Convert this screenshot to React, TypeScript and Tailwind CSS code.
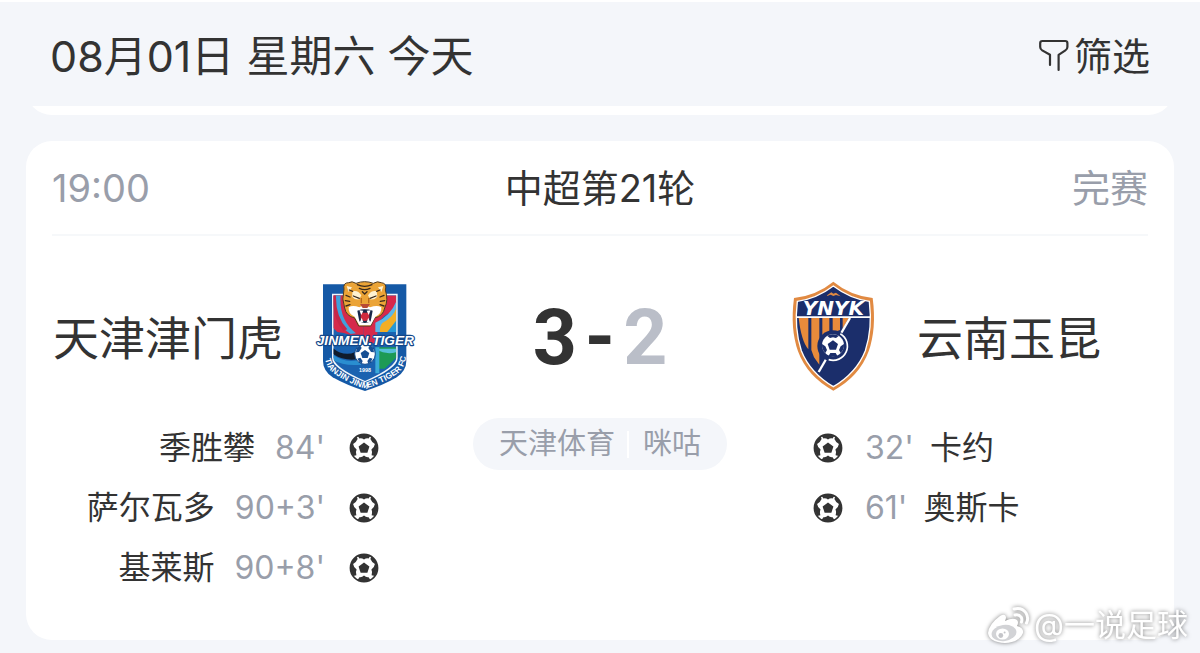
import { clsx } from 'clsx';

type Goal = { player: string; minute: string };

const MATCH = {
  time: '19:00',
  round: '中超第21轮',
  status: '完赛',
  home: { name: '天津津门虎', score: 3 },
  away: { name: '云南玉昆', score: 2 },
  channels: ['天津体育', '咪咕'],
};

const HOME_GOALS: Goal[] = [
  { player: '季胜攀', minute: "84'" },
  { player: '萨尔瓦多', minute: "90+3'" },
  { player: '基莱斯', minute: "90+8'" },
];

const AWAY_GOALS: Goal[] = [
  { player: '卡约', minute: "32'" },
  { player: '奥斯卡', minute: "61'" },
];

function FilterIcon() {
  return (
    <svg
      viewBox="0 0 32 34"
      className="h-[34px] w-8"
      fill="none"
      stroke="#333"
      strokeWidth="2.2"
      strokeLinecap="round"
      strokeLinejoin="round"
      aria-hidden="true"
    >
      <path d="M12 26V15.800L4.200 11.400Q2.200 10.200 2.200 8V4.200Q2.200 2 4.400 2H27.200Q29.400 2 29.400 4.200V8Q29.400 10.200 27.400 11.400L20.600 15.800V31" />
    </svg>
  );
}

function BallIcon() {
  return (
    <svg viewBox="0 0 30 30" className="size-[30px] shrink-0" aria-hidden="true">
      <circle cx="15" cy="15" r="13.600" fill="#fff" stroke="#333" strokeWidth="1.600" />
      <g fill="#333">
        <path d="M15 9.400l5.400 4-2 6.400h-6.800l-2-6.400z" />
        <path d="M8.600 2.800Q15-.2 21.400 2.800L19.600 5.400Q17 5 15 6.400Q13 5 10.400 5.400z" />
        <path d="M22.200 3.400Q27.600 7 28.600 14Q28.600 19 25.800 23L22.600 22.200Q23.600 18.600 22.400 16.400Q25.400 14.400 25.900 11Q22.800 9.400 21.400 6z" />
        <path d="M7.800 3.400Q2.400 7 1.400 14Q1.400 19 4.200 23L7.400 22.200Q6.400 18.600 7.600 16.400Q4.600 14.400 4.100 11Q7.200 9.400 8.600 6z" />
        <path d="M8.600 27Q15 30.200 21.400 27L19.600 24.200Q17 24.600 15 22.600Q13 24.600 10.400 24.200z" />
      </g>
    </svg>
  );
}

function TianjinCrest() {
  return (
    <svg
      viewBox="51 33 288 330"
      className="h-[110px] w-24 shrink-0 overflow-visible"
      role="img"
      aria-label="天津津门虎"
    >
      <defs>
        <clipPath id="tj-field">
          <path d="M100 76H289V262Q289 292 195 333Q100 292 100 262Z" />
        </clipPath>
        <path id="tj-ring" d="M73 244Q72 288 102 311Q150 343 196 356Q244 343 292 311Q322 286 318 236" />
      </defs>
      <path d="M69 43H319V272Q319 302 290 322Q250 346 195 363Q140 346 98 322Q69 302 69 272Z" fill="#1559a6" />
      <path d="M96 71H293V264Q293 296 195 337Q96 296 96 264Z" fill="#f1f6fb" />
      <g clipPath="url(#tj-field)">
        <rect x="96" y="70" width="200" height="270" fill="#1a62b0" />
        <path d="M96 70H190V215Q150 190 112 186L96 170Z" fill="#d52a4b" />
        <path d="M122 76Q116 150 168 190L152 192Q98 160 104 76Z" fill="#3fa0dc" />
        <path d="M108 76Q106 140 142 178L130 182Q98 150 98 76Z" fill="#c62748" />
        <path d="M190 110H232V220H190Z" fill="#d52a4b" />
        <path d="M226 76H290V120Q248 130 226 172Z" fill="#d7284a" />
        <path d="M290 92Q270 140 226 158V186H290Z" fill="#5cb6e8" />
        <path d="M290 110Q282 140 248 158Q238 168 240 186H270Q290 160 290 150Z" fill="#f3ae25" />
        <path d="M290 150L262 186H290Z" fill="#2798d6" />
        <path d="M96 232Q130 262 166 246L172 268Q130 274 96 250Z" fill="#101b2b" />
        <path d="M96 252Q130 280 176 270L184 284Q130 290 96 268Z" fill="#2a8ed0" />
        <path d="M228 232H290V262L254 296H228Z" fill="#1d9a55" />
        <path d="M230 238Q258 256 290 246V236H230Z" fill="#54bfd8" />
        <path d="M226 232H238V310H226Z" fill="#3aa9d8" />
      </g>

      {/* tiger head */}
      <path
        d="M132 58Q128 38 146 38Q156 32 168 40Q194 30 220 40Q232 32 244 38Q262 40 256 60Q266 90 254 114Q250 138 224 144L212 168H176L164 144Q138 138 134 114Q124 88 132 58Z"
        fill="#eba437"
        stroke="#4d3a23"
        strokeWidth="3"
      />
      <path d="M140 48l16 4-10 14zM250 48l-16 4 10 14z" fill="#fff3d4" />
      <path
        d="M146 112Q158 104 178 112L194 104 210 112Q232 104 244 112Q246 132 226 140L212 166H178L164 140Q144 132 146 112Z"
        fill="#fff"
      />
      <path
        d="M158 64Q174 60 184 76L178 88Q164 90 156 80ZM230 64Q214 60 204 76L210 88Q224 90 232 80Z"
        fill="#fff2d0"
      />
      <path
        d="M172 44Q194 54 216 44M178 55Q194 63 210 55M187 65L194 72 201 65M138 76l12 5M136 92l13 2M138 108l12-4M252 76l-12 5M254 92l-13 2M252 108l-12-4M160 78l18 7M228 78l-18 7M148 60l10 4M240 60l-10 4"
        fill="none"
        stroke="#3a2a1c"
        strokeWidth="4"
        strokeLinecap="round"
      />
      <path d="M184 84V100M206 84V100" stroke="#b7691c" strokeWidth="4" />
      <path d="M180 102H210L202 114H188Z" fill="#b84a35" />
      <path d="M172 122Q194 114 218 122L212 154Q194 164 178 154Z" fill="#182849" />
      <path d="M182 128H208V148Q194 158 182 148Z" fill="#cf2a3e" />
      <path d="M178 121l6 14 6-13zM212 121l-6 14-6-13zM180 156l5-13 5 14zM210 156l-5-13-5 14z" fill="#fff" />

      {/* ball */}
      <circle cx="195" cy="252" r="31" fill="#fff" stroke="#134b8e" strokeWidth="3" />
      <path
        d="M195 240l13 9-5 15h-16l-5-15zM170 234l10-8 5 8-8 12-9 1zM220 234l-10-8-5 8 8 12 9 1zM172 266l9-3 7 10-3 8q-8-4-13-15zM218 266l-9-3-7 10 3 8q8-4 13-15z"
        fill="#174f93"
      />
      <text
        x="195"
        y="305"
        textAnchor="middle"
        fill="#fff"
        className="font-['Liberation_Sans'] text-[16px] font-bold"
      >
        1998
      </text>

      <text
        x="196"
        y="225"
        textAnchor="middle"
        fill="#fff"
        stroke="#14478a"
        strokeWidth="7"
        strokeLinejoin="round"
        paintOrder="stroke"
        className="font-['Liberation_Sans'] text-[41px] font-bold italic"
      >
        JINMEN.TIGER
      </text>
      <text fill="#fff" className="font-['Liberation_Sans'] text-[25px] font-bold">
        <textPath href="#tj-ring" startOffset="50%" textAnchor="middle">
          TIANJIN JINMEN TIGER FC
        </textPath>
      </text>
    </svg>
  );
}

function YunnanCrest() {
  return (
    <svg
      viewBox="51 33 288 330"
      className="h-[110px] w-24 shrink-0"
      role="img"
      aria-label="云南玉昆"
    >
      <defs>
        <clipPath id="yn-field">
          <path d="M84 144H298Q304 190 284 244Q258 306 190 348Q122 306 96 244Q78 190 84 144Z" />
        </clipPath>
      </defs>
      <path
        d="M190 35Q240 76 308 84Q320 176 296 244Q268 320 190 362Q112 320 84 244Q60 176 72 84Q140 76 190 35Z"
        fill="#e18a42"
      />
      <path
        d="M190 48Q240 86 298 94Q308 176 286 242Q260 308 190 350Q120 308 94 242Q72 176 82 94Q140 86 190 48Z"
        fill="#1b2e6b"
        stroke="#fff"
        strokeWidth="4"
      />
      <path d="M168 78L184 67 190 71 198 68 212 79 198 75 190 78 182 74Z" fill="#e18a42" />
      <path d="M80 139H302V144H80Z" fill="#fff" />
      <g clipPath="url(#yn-field)">
        <path
          d="M86 144H115V238Q94 214 86 144ZM124 144H148V284L132 262L124 240ZM157 144H178V184L157 212ZM188 144H210V180L188 188ZM218 144H236L218 176Z"
          fill="#e98b3b"
        />
        <path d="M240 144L146 306" stroke="#fff" strokeWidth="7" />
      </g>
      <circle cx="189" cy="228" r="47" fill="#1b2e6b" />
      <path d="M211 191A43 43 0 0 1 176 269" fill="none" stroke="#fff" strokeWidth="5" />
      <circle cx="189" cy="226" r="33" fill="#fff" />
      <path
        d="M189 211l15 11-6 17h-19l-6-17zM171 197q17-9 36 0l-9 7-9-2-9 2zM222 222q1 17-10 27l-5-9 5-11zM156 222q-1 17 10 27l5-9-5-11zM176 257q13 5 26 0l-5-8h-16z"
        fill="#1b2e6b"
      />
      <text
        x="190"
        y="135"
        textAnchor="middle"
        fill="#fff"
        className="font-['DejaVu_Sans'] text-[60px] font-bold italic"
      >
        YNYK
      </text>
    </svg>
  );
}

function WeiboIcon() {
  return (
    <svg viewBox="0 0 44 38" className="h-[38px] w-11" aria-hidden="true">
      <path
        d="M14 10Q19 7 20 11Q20 13 19 15Q27 11 31 14Q33 16 31 20Q38 22 37 27Q34 36 19 37Q3 36 2 27Q3 18 14 10Z"
        fill="#fff"
      />
      <ellipse cx="18" cy="27" rx="12.500" ry="8" fill="#d2d3d6" transform="rotate(-8 18 27)" />
      <ellipse cx="16.500" cy="28" rx="6.500" ry="5.500" fill="#fff" />
      <circle cx="14.800" cy="29.500" r="2.400" fill="#c4c5c9" />
      <circle cx="18.600" cy="26.500" r="1" fill="#c4c5c9" />
      <path
        d="M28 3Q36 1 40 7Q43 12 40.500 17M29 9Q33 8 35 11Q36.500 13 35.500 16"
        fill="none"
        stroke="#fff"
        strokeWidth="3"
        strokeLinecap="round"
      />
    </svg>
  );
}

function GoalList({ goals, side }: { goals: Goal[]; side: 'home' | 'away' }) {
  const isHome = side === 'home';

  return (
    <ul>
      {goals.map((goal) => (
        <li
          key={goal.player}
          className={clsx(
            'flex h-[60px] items-center text-[32px] leading-10 whitespace-nowrap',
            isHome ? 'flex-row-reverse gap-6 pr-[34px]' : 'gap-[22px] pl-[26px]',
          )}
        >
          <BallIcon />
          <div className={clsx('flex items-center', isHome ? 'flex-row-reverse gap-5' : 'gap-4')}>
            <span className="text-[#999eaa]">{goal.minute}</span>
            <span>{goal.player}</span>
          </div>
        </li>
      ))}
    </ul>
  );
}

export default function App() {
  return (
    <div className="relative min-h-screen overflow-hidden border-t-2 border-white bg-[#f4f6fa] font-['Inter','Noto_Sans_CJK_SC',sans-serif] text-[#333]">
      <header className="flex h-[104px] items-center justify-between px-[50px] pt-[3px]">
        <h1 className="text-[43px] leading-[48px]">08月01日 星期六 今天</h1>
        <button type="button" className="flex items-center gap-1 text-[38px] leading-[48px]">
          <FilterIcon />
          筛选
        </button>
      </header>

      <main className="px-[26px]">
        {/* tail of the previous match card, scrolled under the header */}
        <div className="mb-[26px] flex h-[9px] items-end overflow-hidden">
          <div className="h-14 w-full shrink-0 rounded-b-[26px] bg-white" />
        </div>

        <article className="rounded-[26px] bg-white px-[26px] pb-[42px]">
          <div className="grid h-[95px] grid-cols-3 items-center border-b-2 border-[#f6f8fa] text-[38px] leading-[48px]">
            <time className="text-[#999eaa]">{MATCH.time}</time>
            <h2 className="text-center whitespace-nowrap">{MATCH.round}</h2>
            <span className="text-right text-[#999eaa]">{MATCH.status}</span>
          </div>

          <div className="grid grid-cols-[1fr_254px_1fr] gap-x-[60px] pt-[45px]">
            <section>
              <div className="mb-[27px] flex items-center justify-end gap-[34px]">
                <h3 className="pt-1 text-[46px] leading-[56px] whitespace-nowrap">{MATCH.home.name}</h3>
                <TianjinCrest />
              </div>
              <GoalList goals={HOME_GOALS} side="home" />
            </section>

            <section className="flex flex-col items-center">
              <p className="mb-[27px] flex h-[110px] items-center gap-2 pt-1 font-['Roboto',sans-serif] text-[77px] leading-none font-bold">
                <span>{MATCH.home.score}</span>
                <span>-</span>
                <span className="text-[#babec8]">{MATCH.away.score}</span>
              </p>
              <button
                type="button"
                className="flex h-[52px] items-center rounded-full bg-[#f4f6fa] px-[26px] text-[29px] leading-10 whitespace-nowrap text-[#999eaa]"
              >
                {MATCH.channels.map((channel, index) => (
                  <span
                    key={channel}
                    className={clsx(
                      'flex h-[27px] items-center',
                      index > 0 && 'ml-3 border-l-2 border-white pl-3.5',
                    )}
                  >
                    {channel}
                  </span>
                ))}
              </button>
            </section>

            <section>
              <div className="mb-[27px] flex items-center gap-[34px]">
                <YunnanCrest />
                <h3 className="pt-1 text-[46px] leading-[56px] whitespace-nowrap">{MATCH.away.name}</h3>
              </div>
              <GoalList goals={AWAY_GOALS} side="away" />
            </section>
          </div>
        </article>
      </main>

      <div className="pointer-events-none absolute right-3 bottom-2 flex items-center gap-1 text-[31px] leading-10 text-white drop-shadow-[0_0_2px_rgba(0,0,0,0.5)]">
        <WeiboIcon />
        <span>@一说足球</span>
      </div>
    </div>
  );
}
